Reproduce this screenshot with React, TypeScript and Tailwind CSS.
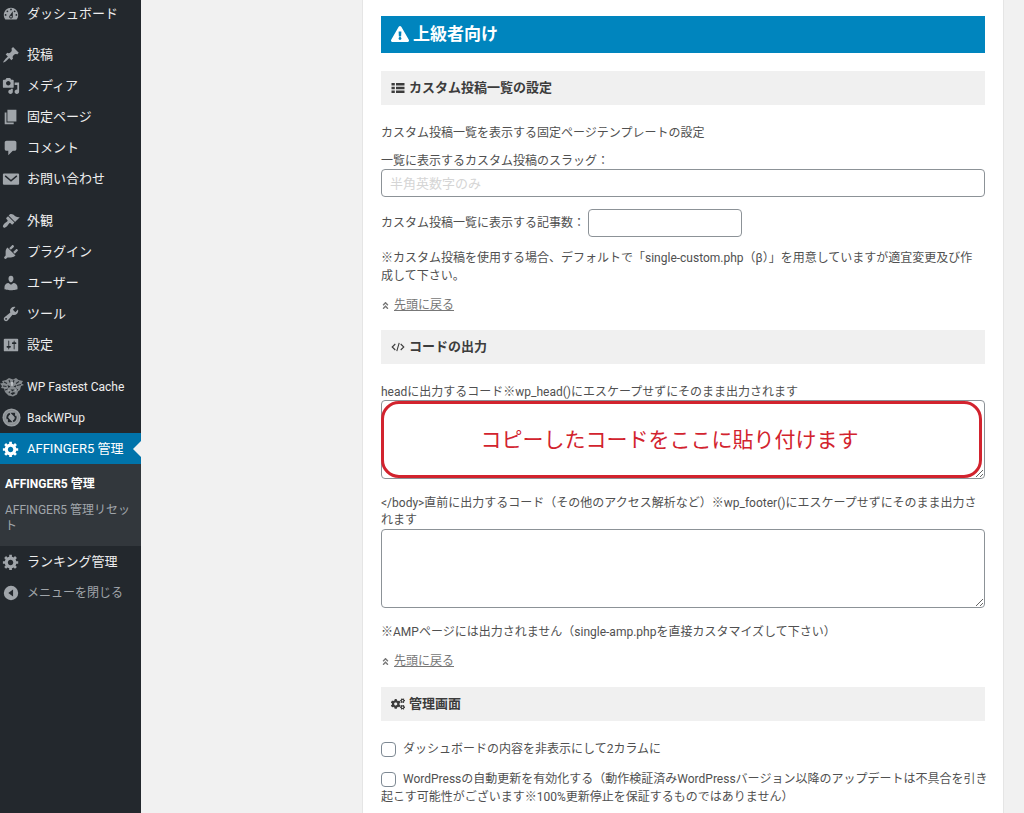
import type { ReactNode } from "react";
import { FaAngleDoubleUp, FaCogs, FaExclamationTriangle } from "react-icons/fa";

const paths = {
  dashboard:
    "M3.76 16h12.48c1.1-1.37 1.76-3.11 1.76-5 0-4.42-3.58-8-8-8s-8 3.58-8 8c0 1.89.66 3.63 1.76 5zM10 4c.55 0 1 .45 1 1s-.45 1-1 1-1-.45-1-1 .45-1 1-1zM6 6c.55 0 1 .45 1 1s-.45 1-1 1-1-.45-1-1 .45-1 1-1zm8 0c.55 0 1 .45 1 1s-.45 1-1 1-1-.45-1-1 .45-1 1-1zm-5.37 5.55L12 7v6c0 1.1-.9 2-2 2s-2-.9-2-2c0-.57.24-1.08.63-1.45zM4 10c.55 0 1 .45 1 1s-.45 1-1 1-1-.45-1-1 .45-1 1-1zm12 0c.55 0 1 .45 1 1s-.45 1-1 1-1-.45-1-1 .45-1 1-1zm-5 3c0-.55-.45-1-1-1s-1 .45-1 1 .45 1 1 1 1-.45 1-1z",
  post: "M10.44 3.02l1.82-1.82 6.36 6.35-1.83 1.82c-1.05-.68-2.48-.57-3.41.36l-.75.75c-.92.93-1.04 2.35-.35 3.41l-1.83 1.82-2.41-2.41-2.8 2.79c-.42.42-3.38 2.71-3.8 2.29s1.86-3.39 2.28-3.81l2.79-2.79L4.1 9.36l1.83-1.82c1.05.69 2.48.57 3.4-.36l.75-.75c.93-.92 1.05-2.35.36-3.41z",
  media:
    "M13 11V4c0-.55-.45-1-1-1h-1.67L9 1H5L3.67 3H2c-.55 0-1 .45-1 1v7c0 .55.45 1 1 1h10c.55 0 1-.45 1-1zM7 4.5c1.38 0 2.5 1.12 2.5 2.5S8.38 9.5 7 9.5 4.5 8.38 4.5 7 5.62 4.5 7 4.5zM14 6h5v10.5c0 1.38-1.12 2.5-2.5 2.5S14 17.88 14 16.5s1.12-2.5 2.5-2.5c.17 0 .34.02.5.05V9h-3V6zm-4 8.05V13h2v3.5c0 1.38-1.12 2.5-2.5 2.5S7 17.88 7 16.5 8.12 14 9.5 14c.17 0 .34.02.5.05z",
  page: "M6 15V2h10v13H6zm-1 1h8v2H3V5h2v11z",
  comments: "M5 2h9c1.1 0 2 .9 2 2v7c0 1.1-.9 2-2 2h-2l-5 5v-5H5c-1.1 0-2-.9-2-2V4c0-1.1.9-2 2-2z",
  appearance:
    "M14.48 11.06L7.41 3.99l1.5-1.5c.5-.56 2.3-.47 3.51.32 1.21.8 1.43 1.28 2.91 2.1 1.18.64 2.45 1.26 4.45.85zm-.71.71L6.7 4.7 4.93 6.47c-.39.39-.39 1.02 0 1.41l1.06 1.06c.39.39.39 1.03 0 1.42-.6.6-1.43 1.11-2.21 1.69-.35.26-.7.53-1.01.84C1.43 14.23.4 16.08 1.4 17.07c.99 1 2.84-.03 4.18-1.36.31-.31.58-.66.85-1.02.57-.78 1.08-1.61 1.69-2.21.39-.39 1.02-.39 1.41 0l1.06 1.06c.39.39 1.02.39 1.41 0z",
  plugins:
    "M13.11 4.36L9.87 7.6 8 5.73l3.24-3.24c.35-.34 1.05-.2 1.56.32.52.51.66 1.21.31 1.55zm-8 1.77l.91-1.12 9.01 9.01-1.19.84c-.71.71-2.63 1.16-3.82 1.16H6.14L4.9 17.26c-.59.59-1.54.59-2.12 0-.59-.58-.59-1.53 0-2.12l1.24-1.24v-3.88c0-1.13.4-3.19 1.09-3.89zm7.26 3.97l3.24-3.24c.34-.35 1.04-.21 1.55.31.52.51.66 1.21.31 1.55l-3.24 3.25z",
  users:
    "M10 9.25c-2.27 0-2.73-3.44-2.73-3.44C7 4.02 7.82 2 9.97 2c2.16 0 2.98 2.02 2.71 3.81 0 0-.41 3.44-2.68 3.44zm0 2.57L12.72 10c2.39 0 4.52 2.33 4.52 4.53v2.49s-3.65 1.13-7.24 1.13c-3.65 0-7.24-1.13-7.24-1.13v-2.49c0-2.25 1.94-4.48 4.47-4.48z",
  tools:
    "M16.68 9.77c-1.34 1.34-3.3 1.67-4.95.99l-5.41 6.52c-.99.99-2.59.99-3.58 0s-.99-2.59 0-3.57l6.52-5.42c-.68-1.65-.35-3.61.99-4.95 1.28-1.28 3.12-1.62 4.72-1.06l-2.89 2.89 2.82 2.82 2.86-2.87c.53 1.58.18 3.39-1.08 4.65zM3.81 16.21c.4.39 1.04.39 1.43 0 .4-.4.4-1.04 0-1.43-.39-.4-1.03-.4-1.43 0-.39.39-.39 1.03 0 1.43z",
  settings:
    "M18 16V4c0-.55-.45-1-1-1H3c-.55 0-1 .45-1 1v12c0 .55.45 1 1 1h14c.55 0 1-.45 1-1zM8 11h1c.55 0 1 .45 1 1s-.45 1-1 1H8v1.5c0 .28-.22.5-.5.5s-.5-.22-.5-.5V13H6c-.55 0-1-.45-1-1s.45-1 1-1h1V5.5c0-.28.22-.5.5-.5s.5.22.5.5V11zm5-2h-1c-.55 0-1-.45-1-1s.45-1 1-1h1V5.5c0-.28.22-.5.5-.5s.5.22.5.5V7h1c.55 0 1 .45 1 1s-.45 1-1 1h-1v5.5c0 .28-.22.5-.5.5s-.5-.22-.5-.5V9z",
  generic:
    "M18 12h-2.18c-.17.7-.44 1.35-.81 1.93l1.54 1.54-2.1 2.1-1.54-1.54c-.58.36-1.23.63-1.91.79V19H8v-2.18c-.68-.16-1.33-.43-1.91-.79l-1.54 1.54-2.12-2.12 1.54-1.54c-.36-.58-.63-1.23-.79-1.91H1V9.03h2.17c.16-.7.44-1.35.8-1.94L2.43 5.55l2.1-2.1 1.54 1.54c.58-.37 1.24-.64 1.93-.81V2h3v2.18c.68.16 1.33.43 1.91.79l1.54-1.54 2.12 2.12-1.54 1.54c.36.59.64 1.24.8 1.94H18V12zm-8.5 1.5c1.66 0 3-1.34 3-3s-1.34-3-3-3-3 1.34-3 3 1.34 3 3 3z",
};

function Dash({ name }: { name: keyof typeof paths }) {
  return (
    <svg viewBox="0 0 20 20" className="size-[18px] fill-current" aria-hidden="true">
      <path d={paths[name]} />
    </svg>
  );
}

function MailIcon() {
  return (
    <svg viewBox="0 0 20 20" className="size-[18px]" aria-hidden="true">
      <rect x="1" y="4" width="18" height="12.5" rx="1.2" className="fill-current" />
      <path d="M3.5 6.5 10 12l6.5-5.5" fill="none" stroke="#23282d" strokeWidth="1.6" />
    </svg>
  );
}

function TigerIcon() {
  return (
    <svg viewBox="0 0 24 20" className="h-[20px] w-[24px]" aria-hidden="true">
      <path
        d="M2 4 6 3l3-2 4 1.5L16 1l2.5 2 4.5 1-1.5 2.5L24 8l-3 1-1 4-2 1.5-1 3-4 2-4.5-1L5 15l-1-3.5L1 11l1-2L0 6.5 3 6z"
        fill="#858a8e"
      />
      <path
        d="m4 5 3 1.5M9 3l1 2.5M14 3l-1 3M19 4.5l-3 2M3 9l3.5.5M21 7.5l-4 1M5 13l3-1M18 13l-2-1M9 16l1-2"
        stroke="#2c3136"
        strokeWidth="1.1"
        fill="none"
      />
      <path d="m7.5 8 3 1.5-2 1.5zM16.5 8l-3 1.5 2 1zM10.5 12.5h4l-2 2zM10.5 16.5q3-2 5-.5l-3 2z" fill="#23282d" />
      <path d="M11 5.5h2L12 9zM8 12.5l2 2M15.5 13.5l1-1.5" fill="#c4c8cb" stroke="#c4c8cb" strokeWidth=".8" />
    </svg>
  );
}

function BackupIcon() {
  return (
    <svg viewBox="0 0 20 20" className="size-[19px]" aria-hidden="true">
      <circle cx="10" cy="10" r="9.5" fill="#989da1" />
      <circle cx="10" cy="10" r="7.3" fill="none" stroke="#7d8286" strokeWidth=".8" />
      <path d="M5.9 11.8A4.4 4.4 0 0 1 8.3 6M14.1 8.2A4.4 4.4 0 0 1 11.7 14" fill="none" stroke="#23282d" strokeWidth="2" />
      <path d="M8.8 5h5v5zM11.2 15h-5v-5z" fill="#23282d" />
    </svg>
  );
}

function CollapseIcon() {
  return (
    <svg viewBox="0 0 20 20" className="size-[18px]" aria-hidden="true">
      <circle cx="10" cy="10" r="8" className="fill-current" />
      <path d="M12.3 6v8L7 10z" fill="#23282d" />
    </svg>
  );
}

function ListIcon() {
  return (
    <svg viewBox="0 0 14 12" className="h-3 w-[14px] fill-current" aria-hidden="true">
      <path d="M.5 1h3.3v2.6H.5zM5 1h8.5v2.6H5zM.5 4.7h3.3v2.6H.5zM5 4.7h8.5v2.6H5zM.5 8.4h3.3V11H.5zM5 8.4h8.5V11H5z" />
    </svg>
  );
}

function CodeIcon() {
  return (
    <svg viewBox="0 0 14 12" className="h-3 w-[14px]" fill="none" stroke="currentColor" strokeWidth="1.1" aria-hidden="true">
      <path d="M4.3 3 1.2 6l3.1 3M9.7 3l3.1 3-3.1 3M8.2 1.8 5.8 10.2" />
    </svg>
  );
}

function MenuRow({ icon, children }: { icon: ReactNode; children: ReactNode }) {
  return (
    <li>
      <a href="#" className="flex h-[31px] items-center text-[13px] text-[#eee]">
        <span className="w-[27px] shrink-0 pl-[2px] text-[#a0a5aa]">{icon}</span>
        {children}
      </a>
    </li>
  );
}

function Sidebar() {
  return (
    <nav className="w-[141px] shrink-0 bg-[#23282d] leading-4">
      <ul className="-mt-[2px]">
        <MenuRow icon={<Dash name="dashboard" />}>ダッシュボード</MenuRow>
      </ul>
      <ul className="mt-[10px]">
        <MenuRow icon={<Dash name="post" />}>投稿</MenuRow>
        <MenuRow icon={<Dash name="media" />}>メディア</MenuRow>
        <MenuRow icon={<Dash name="page" />}>固定ページ</MenuRow>
        <MenuRow icon={<Dash name="comments" />}>コメント</MenuRow>
        <MenuRow icon={<MailIcon />}>お問い合わせ</MenuRow>
      </ul>
      <ul className="mt-[11px]">
        <MenuRow icon={<Dash name="appearance" />}>外観</MenuRow>
        <MenuRow icon={<Dash name="plugins" />}>プラグイン</MenuRow>
        <MenuRow icon={<Dash name="users" />}>ユーザー</MenuRow>
        <MenuRow icon={<Dash name="tools" />}>ツール</MenuRow>
        <MenuRow icon={<Dash name="settings" />}>設定</MenuRow>
      </ul>
      <ul className="mt-[11px]">
        <li>
          <a href="#" className="flex h-[31px] items-center text-xs text-[#eee]">
            <span className="w-[27px] shrink-0">
              <TigerIcon />
            </span>
            WP Fastest Cache
          </a>
        </li>
        <MenuRow icon={<BackupIcon />}>
          <span className="text-xs">BackWPup</span>
        </MenuRow>
        <li>
          <a href="#" aria-current="page" className="flex h-[31px] items-center bg-[#0073aa] text-[13px] text-white">
            <span className="w-[27px] shrink-0 pl-[2px]">
              <Dash name="generic" />
            </span>
            AFFINGER5 管理
            <span className="ml-auto border-y-8 border-r-8 border-y-transparent border-r-[#f1f1f1]" />
          </a>
          <ul className="flex flex-col gap-[10px] bg-[#32373c] pt-3 pr-2 pb-3 pl-[5px] text-xs leading-4 text-[#a0a5aa]">
            <li>
              <a href="#" className="font-bold text-white">
                AFFINGER5 管理
              </a>
            </li>
            <li>
              <a href="#">AFFINGER5 管理リセット</a>
            </li>
          </ul>
        </li>
        <MenuRow icon={<Dash name="generic" />}>ランキング管理</MenuRow>
        <li>
          <button type="button" className="flex h-[31px] items-center text-xs text-[#a0a5aa]">
            <span className="w-[27px] pl-[2px]">
              <CollapseIcon />
            </span>
            メニューを閉じる
          </button>
        </li>
      </ul>
    </nav>
  );
}

function SectionTitle({ icon, children }: { icon: ReactNode; children: ReactNode }) {
  return (
    <h3 className="flex h-[34px] items-center gap-1 bg-[#f0f0f0] px-[10px] text-[13px] font-bold text-[#3c3c3c]">
      {icon}
      {children}
    </h3>
  );
}

function BackToTop() {
  return (
    <p className="mt-[11px] flex items-center gap-1 text-[#777]">
      <FaAngleDoubleUp className="size-[9px]" />
      <a href="#" className="underline">
        先頭に戻る
      </a>
    </p>
  );
}

const field = "rounded border border-[#8c9297] bg-white outline-none";
const box = "mr-[7px] size-[15px] appearance-none rounded border border-[#7e8993] bg-white align-middle";

export default function App() {
  return (
    <div
      lang="ja"
      className="flex min-h-screen bg-[#f1f1f1] font-['Roboto','Noto_Sans_CJK_JP',sans-serif] text-xs leading-[18px] text-[#505050]"
    >
      <Sidebar />
      <main className="flex min-w-0 flex-1 pr-5 pl-[221px]">
        <div className="min-w-0 flex-1 border-x border-[#e5e5e5] bg-white px-[18px] pt-4">
          <h2 className="flex h-[37px] items-center gap-1 bg-[#0085be] px-[10px] pb-[2px] text-[17px] font-bold text-white">
            <FaExclamationTriangle className="size-[18px]" />
            上級者向け
          </h2>

          <section className="mt-[18px]">
            <SectionTitle icon={<ListIcon />}>カスタム投稿一覧の設定</SectionTitle>
            <p className="mt-[19px]">カスタム投稿一覧を表示する固定ページテンプレートの設定</p>
            <label htmlFor="slug" className="mt-[11px] block leading-4">
              一覧に表示するカスタム投稿のスラッグ：
            </label>
            <input
              id="slug"
              type="text"
              placeholder="半角英数字のみ"
              className={`${field} block h-7 w-full px-2 text-[13px] placeholder:text-[#d5d5d5]`}
            />
            <div className="mt-3 flex h-7 items-center gap-[3px]">
              <label htmlFor="count">カスタム投稿一覧に表示する記事数：</label>
              <input id="count" type="text" className={`${field} h-7 w-[154px] px-2`} />
            </div>
            <p className="mt-3 pr-2">
              ※カスタム投稿を使用する場合、デフォルトで「single-custom.php（β）」を用意していますが適宜変更及び作成して下さい。
            </p>
            <BackToTop />
          </section>

          <section className="mt-4">
            <SectionTitle icon={<CodeIcon />}>コードの出力</SectionTitle>
            <label htmlFor="head-code" className="mt-5 block leading-4">
              headに出力するコード※wp_head()にエスケープせずにそのまま出力されます
            </label>
            <div className="relative">
              <textarea id="head-code" className={`${field} block h-[79px] w-full p-2`} />
              <div className="pointer-events-none absolute inset-y-px right-[3px] left-0 flex items-center justify-center rounded-[18px] border-3 border-[#d2232e] pr-6 text-[21px] text-[#d2232e]">
                コピーしたコードをここに貼り付けます
              </div>
            </div>
            <label htmlFor="foot-code" className="mt-4 block pr-1 leading-[17px]">
              &lt;/body&gt;直前に出力するコード（その他のアクセス解析など）※wp_footer()にエスケープせずにそのまま出力されます
            </label>
            <textarea id="foot-code" className={`${field} block h-[79px] w-full p-2`} />
            <p className="mt-[15px]">※AMPページには出力されません（single-amp.phpを直接カスタマイズして下さい）</p>
            <BackToTop />
          </section>

          <section className="mt-[17px]">
            <SectionTitle icon={<FaCogs className="size-[14px]" />}>管理画面</SectionTitle>
            <label className="mt-[19px] block">
              <input type="checkbox" className={box} />
              ダッシュボードの内容を非表示にして2カラムに
            </label>
            <label className="-mr-1 mt-3 block">
              <input type="checkbox" className={box} />
              WordPressの自動更新を有効化する（動作検証済みWordPressバージョン以降のアップデートは不具合を引き起こす可能性がございます※100%更新停止を保証するものではありません）
            </label>
          </section>
        </div>
      </main>
    </div>
  );
}
